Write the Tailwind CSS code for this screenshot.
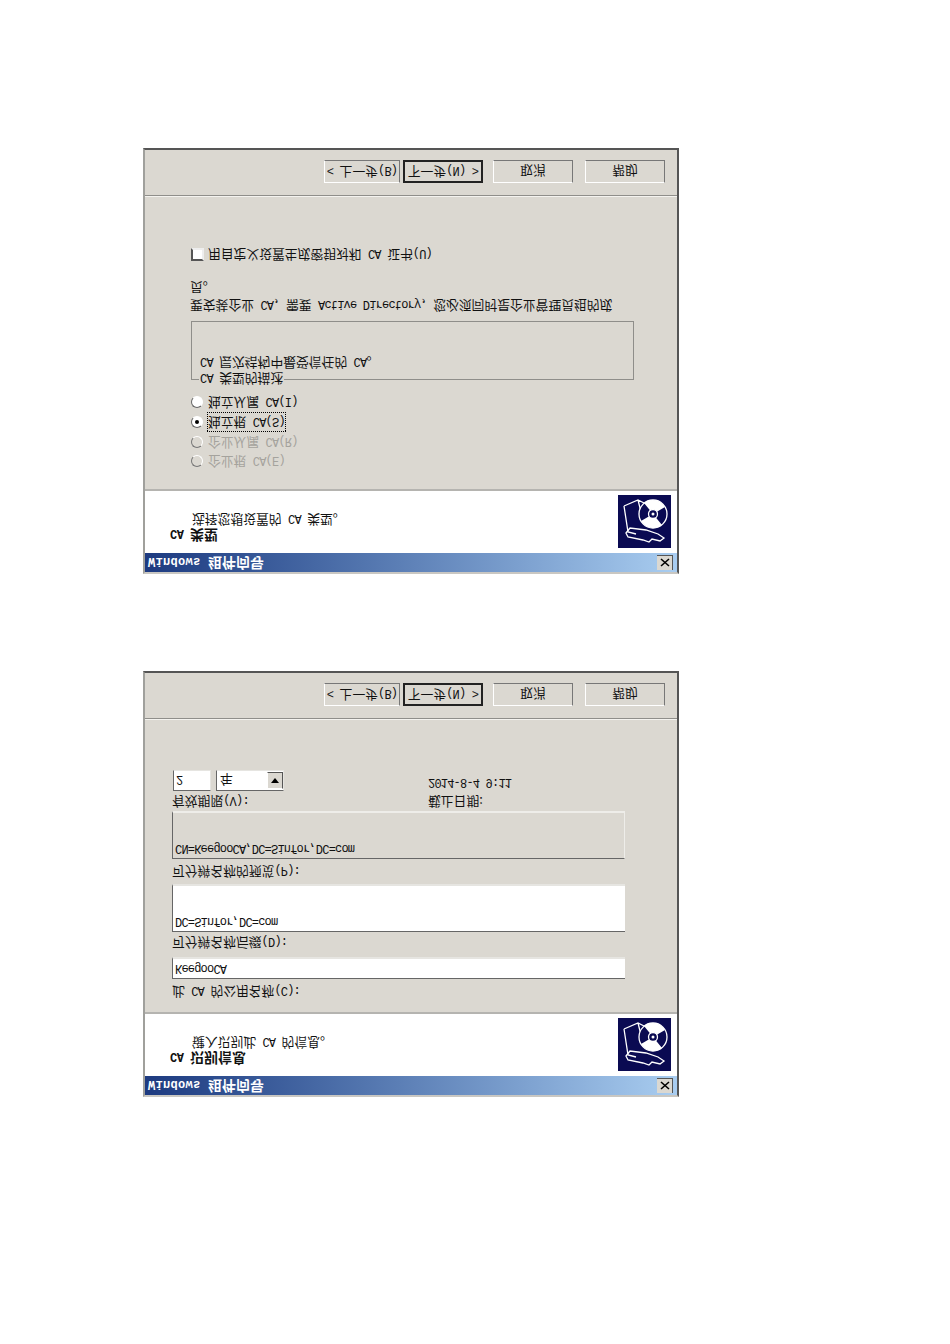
<!DOCTYPE html>
<html lang="zh-CN">
<head>
    <meta charset="UTF-8">
    <title>Windows 组件向导</title>
    <script src="https://cdn.jsdelivr.net/npm/@tailwindcss/browser@4"></script>
</head>
<body class="bg-white font-['Noto_Sans_CJK_SC',sans-serif] text-[12.8px] leading-[15px] text-[#111]">

<div class="flex flex-col gap-[97px] pt-[148px] pl-[143px] pb-[247px]">

    <!-- the scan is upside down, so each dialog is built upright and flipped -->
    <div class="-scale-y-100 w-[536px] h-[426px] flex flex-col bg-[#dbd8d1] border-2 border-t-[#c9c7c2] border-b-[#555] border-l-[#a0a09c] border-r-[#555]">
        <div class="h-[19px] shrink-0 flex items-center justify-between pl-[3px] pr-[4px] bg-linear-to-r from-[#1d3a80] to-[#a9cdf0] text-white font-bold text-[14px]">
            <span class="whitespace-pre"><span class="font-['Liberation_Mono'] text-[12px] tracking-[0.3px]">Windows </span>组件向导</span>
            <span class="w-[16px] h-[15px] bg-[#dbd8d1] border-b border-r border-[#555] flex items-center justify-center">
                <svg width="10" height="9" viewBox="0 0 10 9"><path d="M1 1l8 7M9 1l-8 7" stroke="#000" stroke-width="1.6"/></svg>
            </span>
        </div>
        <div class="h-[64px] shrink-0 flex justify-between bg-white border-b-2 border-b-[#b5b4b0] pl-[25px] pr-[6px] pt-[10px]">
            <div>
                <div class="font-bold text-[14px] whitespace-pre"><span class="font-['Liberation_Mono'] text-[12px] tracking-[-0.5px]">CA </span>类型</div>
                <div class="pl-[22px] -mt-[3px] whitespace-pre">选择您想设置的<span class="font-['Liberation_Mono'] text-[12px] tracking-[-0.8px]"> CA </span>类型。</div>
            </div>
            <svg class="-mt-[5px]" width="53" height="53" viewBox="0 0 53 53">
                <rect width="53" height="53" fill="#0a0a52"/>
                <g transform="translate(0 53) scale(1 -1)" fill="none" stroke="#fff" stroke-width="1.3">
                    <path d="M6 11l14-6 8 4M6 11l4 26 8 2M20 5l3 12"/>
                    <path d="M8 38l4-5 16 2 12 4 6 4-4 3-8-2-3 3-6-2-15-3z"/>
                    <circle cx="35" cy="19" r="14" fill="#0a0a52"/>
                    <path d="M35 19L26 8A14 14 0 0 1 47 12zM35 19L44 30A14 14 0 0 1 23 26z" fill="#fff" stroke="none"/>
                    <circle cx="35" cy="19" r="4.5" fill="#0a0a52"/>
                    <circle cx="35" cy="19" r="1.5" fill="#fff" stroke="none"/>
                </g>
            </svg>
        </div>
        <div class="flex-1 pl-[46px] pt-[20px]">
            <div class="flex flex-col gap-[4.7px] h-[76px]">
                <label class="flex items-center h-[15px] whitespace-pre text-[#a5a39d]"><span class="w-[12px] h-[12px] rounded-full border border-t-[#777] border-l-[#777] border-b-white border-r-white bg-[#dbd8d1] mr-[5px]"></span><span>企业根<span class="font-['Liberation_Mono'] text-[12px] tracking-[-0.8px]"> CA(E)</span></span></label>
                <label class="flex items-center h-[15px] whitespace-pre text-[#a5a39d]"><span class="w-[12px] h-[12px] rounded-full border border-t-[#777] border-l-[#777] border-b-white border-r-white bg-[#dbd8d1] mr-[5px]"></span><span>企业从属<span class="font-['Liberation_Mono'] text-[12px] tracking-[-0.8px]"> CA(R)</span></span></label>
                <label class="flex items-center h-[15px] whitespace-pre"><span class="w-[12px] h-[12px] rounded-full border border-t-[#666] border-l-[#666] border-b-white border-r-white bg-white mr-[5px] flex items-center justify-center"><span class="w-[4px] h-[4px] rounded-full bg-black"></span></span><span class="border border-dotted border-black -ml-[1px]">独立根<span class="font-['Liberation_Mono'] text-[12px] tracking-[-0.8px]"> CA(S)</span></span></label>
                <label class="flex items-center h-[15px] whitespace-pre"><span class="w-[12px] h-[12px] rounded-full border border-t-[#666] border-l-[#666] border-b-white border-r-white bg-white mr-[5px]"></span><span>独立从属<span class="font-['Liberation_Mono'] text-[12px] tracking-[-0.8px]"> CA(I)</span></span></label>
            </div>
            <div class="relative mt-[13px] w-[443px] h-[59px] border border-[#8f8e8a]">
                <span class="absolute -top-[8px] left-[7px] bg-[#dbd8d1] px-[1px] whitespace-pre"><span class="font-['Liberation_Mono'] text-[12px] tracking-[-0.8px]">CA </span>类型的描述</span>
                <div class="pl-[8px] pt-[8px] whitespace-pre"><span class="font-['Liberation_Mono'] text-[12px] tracking-[-0.8px]">CA </span>层次结构中最受信任的<span class="font-['Liberation_Mono'] text-[12px] tracking-[-0.8px]"> CA</span>。</div>
            </div>
            <div class="mt-[7px] w-[432px] -ml-[1px]">要安装企业<span class="font-['Liberation_Mono'] text-[12px] tracking-[-0.8px]"> CA</span>，需要<span class="font-['Liberation_Mono'] text-[12px] tracking-[-0.8px]"> Active Directory</span>，您必须同时是企业管理员组的成员。</div>
            <label class="flex items-center h-[15px] mt-[19px] whitespace-pre"><span class="w-[13px] h-[13px] border-2 border-t-[#555] border-l-[#555] border-b-[#eee] border-r-[#eee] bg-white mr-[4px]"></span><span>用自定义设置生成密钥对和<span class="font-['Liberation_Mono'] text-[12px] tracking-[-0.8px]"> CA </span>证书<span class="font-['Liberation_Mono'] text-[12px] tracking-[-0.8px]">(U)</span></span></label>
        </div>
        <div class="h-[1px] bg-[#f4f3ef]"></div>
        <div class="h-[1px] bg-[#8f8e8a]"></div>
        <div class="h-[45px] shrink-0 flex items-start pl-[179px] pt-[12px]">
            <button class="w-[76px] h-[23px] border border-t-white border-l-white border-r-[#777] border-b-[#777] whitespace-pre"><span class="font-['Liberation_Mono'] text-[12px] tracking-[-0.8px]">&lt; </span>上一步<span class="font-['Liberation_Mono'] text-[12px] tracking-[-0.8px]">(B)</span></button>
            <button class="w-[80px] h-[23px] ml-[3px] border-2 border-[#222] whitespace-pre">下一步<span class="font-['Liberation_Mono'] text-[12px] tracking-[-0.8px]">(N) &gt;</span></button>
            <button class="w-[80px] h-[23px] ml-[10px] border border-t-white border-l-white border-r-[#777] border-b-[#777]">取消</button>
            <button class="w-[80px] h-[23px] ml-[12px] border border-t-white border-l-white border-r-[#777] border-b-[#777]">帮助</button>
        </div>
    </div>

    <div class="-scale-y-100 w-[536px] h-[426px] flex flex-col bg-[#dbd8d1] border-2 border-t-[#c9c7c2] border-b-[#555] border-l-[#a0a09c] border-r-[#555]">
        <div class="h-[19px] shrink-0 flex items-center justify-between pl-[3px] pr-[4px] bg-linear-to-r from-[#1d3a80] to-[#a9cdf0] text-white font-bold text-[14px]">
            <span class="whitespace-pre"><span class="font-['Liberation_Mono'] text-[12px] tracking-[0.3px]">Windows </span>组件向导</span>
            <span class="w-[16px] h-[15px] bg-[#dbd8d1] border-b border-r border-[#555] flex items-center justify-center">
                <svg width="10" height="9" viewBox="0 0 10 9"><path d="M1 1l8 7M9 1l-8 7" stroke="#000" stroke-width="1.6"/></svg>
            </span>
        </div>
        <div class="h-[64px] shrink-0 flex justify-between bg-white border-b-2 border-b-[#b5b4b0] pl-[25px] pr-[6px] pt-[10px]">
            <div>
                <div class="font-bold text-[14px] whitespace-pre"><span class="font-['Liberation_Mono'] text-[12px] tracking-[-0.5px]">CA </span>识别信息</div>
                <div class="pl-[22px] -mt-[3px] whitespace-pre">键入识别此<span class="font-['Liberation_Mono'] text-[12px] tracking-[-0.8px]"> CA </span>的信息。</div>
            </div>
            <svg class="-mt-[5px]" width="53" height="53" viewBox="0 0 53 53">
                <rect width="53" height="53" fill="#0a0a52"/>
                <g transform="translate(0 53) scale(1 -1)" fill="none" stroke="#fff" stroke-width="1.3">
                    <path d="M6 11l14-6 8 4M6 11l4 26 8 2M20 5l3 12"/>
                    <path d="M8 38l4-5 16 2 12 4 6 4-4 3-8-2-3 3-6-2-15-3z"/>
                    <circle cx="35" cy="19" r="14" fill="#0a0a52"/>
                    <path d="M35 19L26 8A14 14 0 0 1 47 12zM35 19L44 30A14 14 0 0 1 23 26z" fill="#fff" stroke="none"/>
                    <circle cx="35" cy="19" r="4.5" fill="#0a0a52"/>
                    <circle cx="35" cy="19" r="1.5" fill="#fff" stroke="none"/>
                </g>
            </svg>
        </div>
        <div class="flex-1 pl-[27px] pt-[12px]">
            <div class="h-[15px] whitespace-pre">此<span class="font-['Liberation_Mono'] text-[12px] tracking-[-0.8px]"> CA </span>的公用名称<span class="font-['Liberation_Mono'] text-[12px] tracking-[-0.8px]">(C):</span></div>
            <div class="mt-[6px] w-[453px] h-[22px] bg-white border-t border-t-[#666] border-l border-l-[#666] border-b-2 border-b-[#e6e5e1] pl-[2px]"><span class="font-['Liberation_Mono'] text-[12px] tracking-[-0.8px]">KeegooCA</span></div>
            <div class="mt-[6px] h-[15px]">可分辨名称后缀<span class="font-['Liberation_Mono'] text-[12px] tracking-[-0.8px]">(D):</span></div>
            <div class="mt-[4px] w-[453px] h-[48px] bg-white border-t border-t-[#666] border-l border-l-[#666] border-b-2 border-b-[#e6e5e1] pl-[2px]"><span class="font-['Liberation_Mono'] text-[12px] tracking-[-0.8px]">DC=Sinfor,DC=com</span></div>
            <div class="mt-[4px] h-[15px]">可分辨名称的预览<span class="font-['Liberation_Mono'] text-[12px] tracking-[-0.8px]">(P):</span></div>
            <div class="mt-[6px] w-[453px] h-[48px] border-t border-t-[#666] border-b-2 border-b-[#eeede9] border-l border-l-[#666] border-r border-r-[#eeede9] pl-[2px]"><span class="font-['Liberation_Mono'] text-[12px] tracking-[-0.8px]">CN=KeegooCA,DC=Sinfor,DC=com</span></div>
            <div class="mt-[1px] flex">
                <div class="w-[256px]">
                    <div class="h-[15px]">有效期限<span class="font-['Liberation_Mono'] text-[12px] tracking-[-0.8px]">(V):</span></div>
                    <div class="mt-[4px] ml-[1px] flex gap-[5px]">
                        <div class="w-[38px] h-[21px] bg-white border border-t-[#666] border-l-[#666] border-b-[#e6e5e1] border-r-[#e6e5e1] pl-[2px] pt-[1px]"><span class="font-['Liberation_Mono'] text-[12px] tracking-[-0.8px]">2</span></div>
                        <div class="w-[68px] h-[21px] bg-white border border-t-[#666] border-l-[#666] border-b-[#e6e5e1] border-r-[#e6e5e1] pl-[3px] flex items-center justify-between">年
                            <span class="w-[16px] h-[17px] bg-[#dbd8d1] border border-t-white border-l-white border-r-[#555] border-b-[#555] flex items-center justify-center">
                                <svg width="8" height="5" viewBox="0 0 8 5"><path d="M0 0h8l-4 5z" fill="#000"/></svg>
                            </span>
                        </div>
                    </div>
                </div>
                <div>
                    <div class="h-[15px]">截止日期:</div>
                    <div class="mt-[3px] h-[15px]"><span class="font-['Liberation_Mono'] text-[12px] tracking-[-0.8px]">2014-8-4 9:11</span></div>
                </div>
            </div>
        </div>
        <div class="h-[1px] bg-[#f4f3ef]"></div>
        <div class="h-[1px] bg-[#8f8e8a]"></div>
        <div class="h-[45px] shrink-0 flex items-start pl-[179px] pt-[12px]">
            <button class="w-[76px] h-[23px] border border-t-white border-l-white border-r-[#777] border-b-[#777] whitespace-pre"><span class="font-['Liberation_Mono'] text-[12px] tracking-[-0.8px]">&lt; </span>上一步<span class="font-['Liberation_Mono'] text-[12px] tracking-[-0.8px]">(B)</span></button>
            <button class="w-[80px] h-[23px] ml-[3px] border-2 border-[#222] whitespace-pre">下一步<span class="font-['Liberation_Mono'] text-[12px] tracking-[-0.8px]">(N) &gt;</span></button>
            <button class="w-[80px] h-[23px] ml-[10px] border border-t-white border-l-white border-r-[#777] border-b-[#777]">取消</button>
            <button class="w-[80px] h-[23px] ml-[12px] border border-t-white border-l-white border-r-[#777] border-b-[#777]">帮助</button>
        </div>
    </div>

</div>

</body>
</html>
